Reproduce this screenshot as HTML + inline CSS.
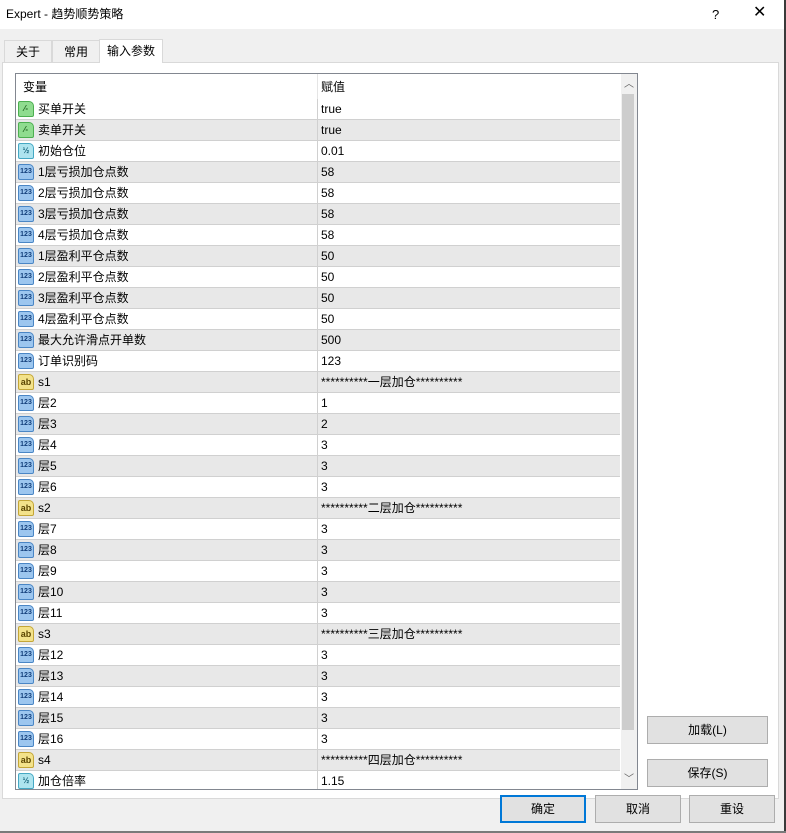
<!DOCTYPE html>
<html><head><meta charset="utf-8"><style>
*{box-sizing:border-box;margin:0;padding:0}
body{width:786px;height:833px;overflow:hidden;background:#f0f0f0;font-family:"Liberation Sans","Noto Sans CJK SC",sans-serif;font-size:12px;line-height:15px;color:#000;position:relative}
.abs{position:absolute}
.title{left:0;top:0;width:786px;height:29px;background:#fff;}
.title .t{left:6px;top:7px;font-size:12px}
.tab{top:40px;height:23px;border:1px solid #d9d9d9;border-bottom:none;background:#f0f0f0;padding:4px 0 0 0;text-align:center}
.panel{left:2px;top:62px;width:777px;height:737px;background:#fff;border:1px solid #d9d9d9}
.list{left:15px;top:73px;width:623px;height:717px;border:1px solid #828790;background:#fff;overflow:hidden}
.row{position:absolute;left:0;width:604px;height:21px;border-bottom:1px solid #d0d0d0}
.row.g{background:#e8e8e8}
.row .n{position:absolute;left:22px;top:3px;height:15px;line-height:15px;white-space:nowrap}
.row .v{position:absolute;left:305px;top:3px;height:15px;line-height:15px;white-space:nowrap}
.row .d{position:absolute;left:301px;top:0;width:1px;height:21px;background:#d0d0d0}
.ic{position:absolute;left:2px;top:2px;width:16px;height:16px;border-radius:2px 5px 2px 2px;font-size:8px;line-height:14px;text-align:center;font-weight:bold}
.b{background:#8fdc8f;border:1px solid #4caf50;color:#1a5e1a}
.f{background:#aee4ef;border:1px solid #45a8c4;color:#16627a}
.i{background:#9cc6ef;border:1px solid #4a86c5;color:#123e7a;font-size:7px}
.s{background:#f3e28a;border:1px solid #c4a637;color:#5a4500;font-size:9px}
.sb{left:605px;top:0;width:16px;height:715px;background:#f0f0f0}
.thumb{top:20px;width:12px;height:636px;background:#cdcdcd}
.btn{height:28px;border:1px solid #adadad;background:#e1e1e1;text-align:center;line-height:26px;font-size:12px}
</style></head><body>
<div class="abs title"><div class="abs t">Expert - 趋势顺势策略</div>
<div class="abs" style="left:712px;top:7px;font-size:13px">?</div>
<div class="abs" style="left:753px;top:5px;font-size:16px">✕</div></div>
<div class="abs tab" style="left:4px;width:48px">关于</div>
<div class="abs tab" style="left:52px;width:48px">常用</div>
<div class="abs panel"></div>
<div class="abs tab" style="left:99px;top:39px;width:64px;height:24px;background:#fff;border-color:#d9d9d9">输入参数</div>
<div class="abs list">
<div class="abs" style="left:7px;top:6px">变量</div>
<div class="abs" style="left:301px;top:0;width:1px;height:25px;background:#e5e5e5"></div>
<div class="abs" style="left:305px;top:6px">赋值</div>
<div id="rows"></div>
<div class="abs sb"><div class="abs" style="left:3px;top:3px;font-size:10px;color:#606060">︿</div>
<div class="abs" style="left:3px;top:698px;font-size:10px;color:#606060">﹀</div></div>
<div class="abs thumb" style="left:606px"></div>
</div>
<div class="abs btn" style="left:647px;top:716px;width:121px">加载(L)</div>
<div class="abs btn" style="left:647px;top:759px;width:121px">保存(S)</div>
<div class="abs btn" style="left:500px;top:795px;width:86px;border:2px solid #0078d7;line-height:24px">确定</div>
<div class="abs btn" style="left:595px;top:795px;width:86px">取消</div>
<div class="abs btn" style="left:689px;top:795px;width:86px">重设</div>
<div class="abs" style="left:784px;top:0;width:2px;height:833px;background:#3a3a3a"></div>
<div class="abs" style="left:0;top:831px;width:786px;height:2px;background:#7a7a7a"></div>
<script>
var d=[["b","买单开关","true"],["b","卖单开关","true"],["f","初始仓位","0.01"],["i","1层亏损加仓点数","58"],["i","2层亏损加仓点数","58"],["i","3层亏损加仓点数","58"],["i","4层亏损加仓点数","58"],["i","1层盈利平仓点数","50"],["i","2层盈利平仓点数","50"],["i","3层盈利平仓点数","50"],["i","4层盈利平仓点数","50"],["i","最大允许滑点开单数","500"],["i","订单识别码","123"],["s","s1","**********一层加仓**********"],["i","层2","1"],["i","层3","2"],["i","层4","3"],["i","层5","3"],["i","层6","3"],["s","s2","**********二层加仓**********"],["i","层7","3"],["i","层8","3"],["i","层9","3"],["i","层10","3"],["i","层11","3"],["s","s3","**********三层加仓**********"],["i","层12","3"],["i","层13","3"],["i","层14","3"],["i","层15","3"],["i","层16","3"],["s","s4","**********四层加仓**********"],["f","加仓倍率","1.15"]];
var lab={b:"⁄-",f:"½",i:"123",s:"ab"};var h="";
d.forEach(function(r,k){h+='<div class="row'+(k%2?' g':'')+'" style="top:'+(25+21*k)+'px"><div class="ic '+r[0]+'">'+lab[r[0]]+'</div><div class="n">'+r[1]+'</div><div class="d"></div><div class="v">'+r[2]+'</div></div>';});
document.getElementById("rows").innerHTML=h;
</script>
</body></html>
